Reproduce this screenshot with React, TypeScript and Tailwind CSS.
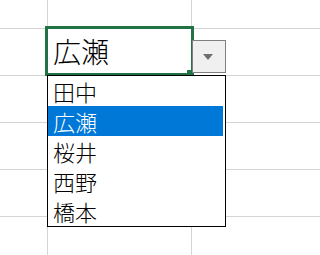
import React from "react"

const names = ["田中", "広瀬", "桜井", "西野", "橋本"]
const rowHeights = ["h-[29px]", "h-[47px]", "h-[47px]", "h-[47px]", "h-[47px]", "h-[39px]"]

const App: React.FC = () => {
  const selected = 1

  return (
    <div
      className="relative w-full min-w-[270px] h-[255px] overflow-hidden bg-white font-light"
      style={{ fontFamily: '"Noto Sans CJK JP", "Noto Sans", sans-serif' }}
    >
      {/* sheet grid */}
      <div className="grid grid-cols-[48px_144px_1fr]">
        {rowHeights.map((h, r) =>
          [0, 1, 2].map(c => (
            <div
              key={`${r}-${c}`}
              className={`${h} border-b border-[#d4d4d4] ${c < 2 ? "border-r" : ""}`}
            />
          ))
        )}
      </div>

      {/* active cell */}
      <div className="absolute left-[45px] top-[26px] w-[149px] h-[50px] border-[3px] border-[#217346] flex items-center pl-[5px]">
        <span className="text-[28px] leading-none text-black">広瀬</span>
      </div>
      <div className="absolute left-[187px] top-[70px] w-[7px] h-[6px] bg-[#217346]" />

      {/* dropdown button */}
      <div className="absolute left-[192px] top-[40px] w-[34px] h-[33px] bg-[#f0f0f0] border border-[#7f7f7f] flex items-center justify-center">
        <svg width="10" height="6" viewBox="0 0 10 6" className="-ml-[2px]">
          <path d="M0 0h10L5 6z" fill="#6e6e6e" />
        </svg>
      </div>

      {/* list */}
      <div className="absolute left-[47px] top-[75px] w-[179px] h-[152px] border border-black bg-white pr-[2px]">
        {names.map((n, i) => (
          <div
            key={n}
            className={`h-[30px] pl-[5px] text-[22px] leading-[30px] ${
              i === selected ? "bg-[#0078d7] text-white" : "text-black"
            }`}
          >
            {n}
          </div>
        ))}
      </div>
    </div>
  )
}

export default App
